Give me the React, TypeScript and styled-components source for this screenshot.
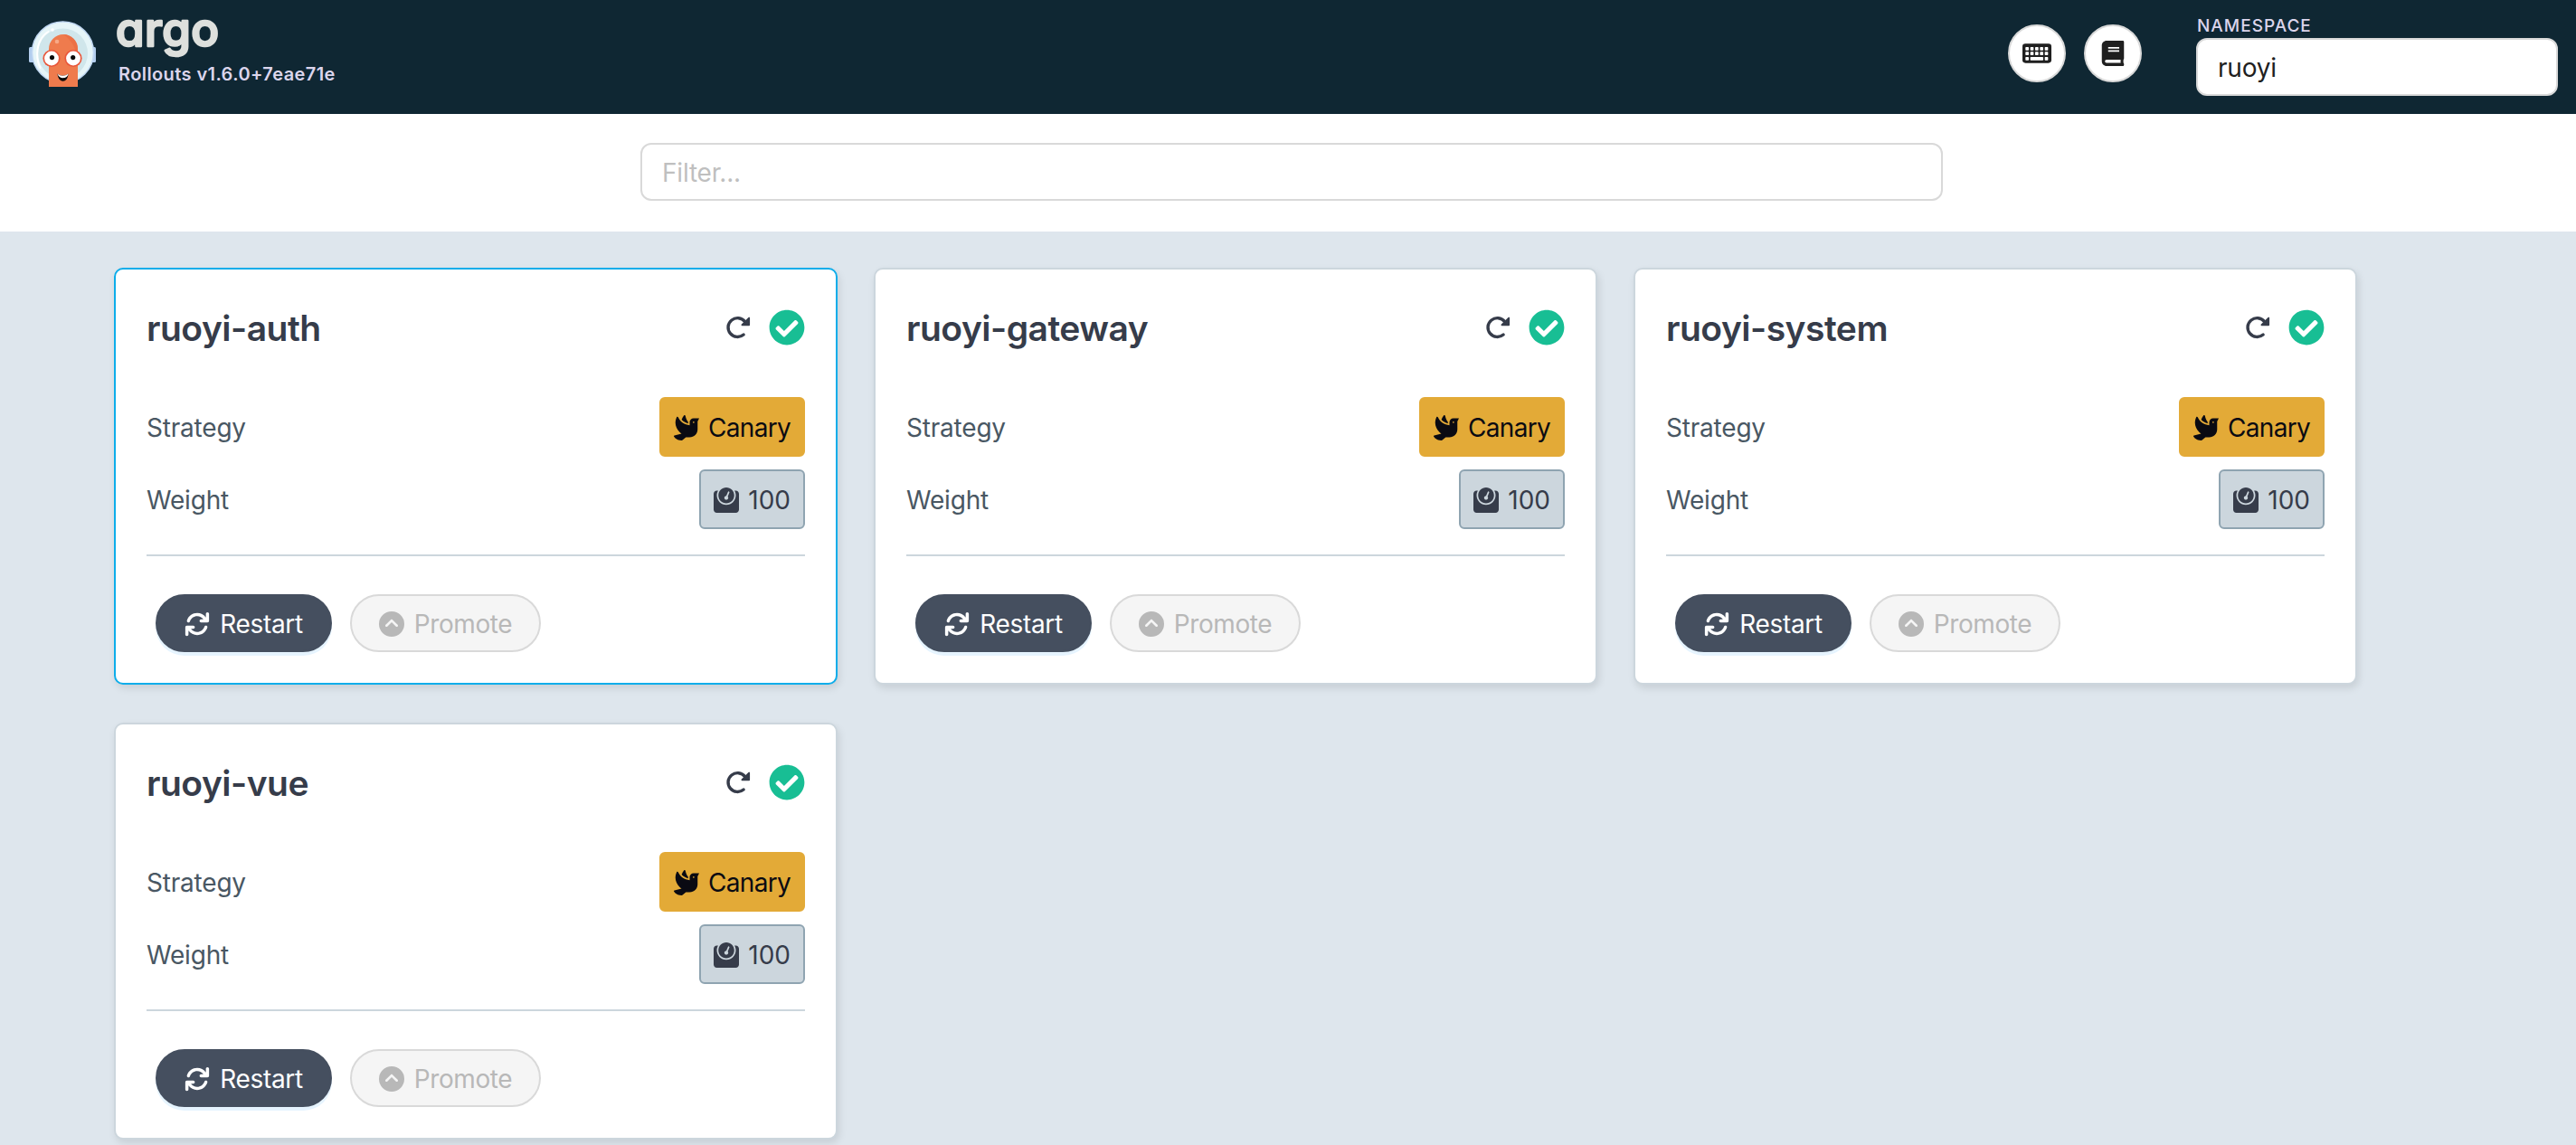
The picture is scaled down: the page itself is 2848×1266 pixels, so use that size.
import React from "react";
import styled, { createGlobalStyle, css } from "styled-components";
import { FaWeight, FaDove, FaCheckCircle, FaBook } from "react-icons/fa";
import { FaCircleChevronUp } from "react-icons/fa6";

const GlobalStyle = createGlobalStyle`
  *, *::before, *::after { box-sizing: border-box; }
  body {
    margin: 0;
    background: #dee6ed;
    font-family: Inter, "Liberation Sans", sans-serif;
    font-size: 28px;
    color: #363c4a;
  }
`;

const Page = styled.div`
  display: flex;
  flex-direction: column;
  height: 1266px;
  overflow: hidden;
  background: #dee6ed;
`;

const Header = styled.header`
  display: flex;
  align-items: flex-start;
  flex: none;
  height: 126px;
  padding: 0 20px 0 32px;
  background: #0f2733;
`;

const Mascot = styled.svg`
  display: block;
  flex: none;
  width: 74px;
  height: 74px;
  margin-top: 22px;
`;

const Brand = styled.div`
  display: flex;
  flex-direction: column;
  margin: 14px auto 0 24px;
`;

const Wordmark = styled.svg`
  display: block;
  width: 116px;
  height: 56px;
  overflow: visible;

  text {
    font-family: Inter, sans-serif;
    font-size: 51px;
    font-weight: 500;
    font-feature-settings: "cv11";
    fill: #dee0dd;
    stroke: #dee0dd;
    stroke-width: 2.5px;
    stroke-linejoin: round;
  }
`;

const Version = styled.div`
  padding-left: 1px;
  font-size: 20px;
  line-height: 24px;
  font-weight: 600;
  letter-spacing: 0.4px;
  color: #dbd5ec;
`;

const HeaderActions = styled.div`
  display: flex;
  gap: 20px;
  margin: 27px 60px 0 0;
`;

const RoundButton = styled.button`
  display: flex;
  align-items: center;
  justify-content: center;
  width: 64px;
  height: 64px;
  padding: 0;
  border: 2px solid #d9d9d9;
  border-radius: 50%;
  background: #fff;
  color: #1f1f1f;
`;

const Namespace = styled.label`
  display: flex;
  flex-direction: column;
  width: 400px;
  padding-top: 16px;
`;

const NamespaceLabel = styled.span`
  height: 26px;
  padding-left: 1px;
  font-size: 19px;
  line-height: 25px;
  font-weight: 500;
  letter-spacing: 1px;
  color: #dbd5ec;
`;

const TextInput = styled.input`
  width: 100%;
  height: 64px;
  padding: 2px 22px 0;
  border: 2px solid #d9d9d9;
  border-radius: 12px;
  background: #fff;
  font: inherit;
  font-size: 28px;
  letter-spacing: -0.2px;
  color: #1f1f1f;
  outline: none;

  &::placeholder { color: #bfbfbf; opacity: 1; }
`;

const FilterBar = styled.div`
  display: flex;
  flex: none;
  height: 130px;
  padding: 32px 700px 0 708px;
  background: #fff;
`;

const RolloutGrid = styled.main`
  display: grid;
  grid-template-columns: repeat(3, 800px);
  grid-auto-rows: 461px;
  gap: 42px 40px;
  padding: 40px 126px;
`;

const Card = styled.section<{ $selected?: boolean }>`
  display: flex;
  flex-direction: column;
  padding: 34px;
  border: 2px solid ${(p) => (p.$selected ? "#0dadea" : "#ccd6dd")};
  border-radius: 10px;
  background: #fff;
  box-shadow: 2px 4px 8px rgba(0, 0, 0, 0.1);
`;

const CardHeader = styled.div`
  display: flex;
  align-items: center;
  height: 60px;
  margin-bottom: 47px;
`;

const CardTitle = styled.h2`
  margin: 0 auto 0 0;
  padding-top: 1px;
  font-size: 39px;
  line-height: 60px;
  font-weight: 600;
  letter-spacing: -0.5px;
`;

const HealthIcon = styled(FaCheckCircle)`
  margin-left: 20px;
  color: #18be94;
`;

const Text = styled.span<{ $tracking?: number }>`
  padding-top: 2px;
  letter-spacing: ${(p) => p.$tracking ?? -0.2}px;
`;

const InfoRow = styled.div`
  display: flex;
  align-items: center;
  justify-content: space-between;
  height: 66px;
  margin-bottom: 14px;
  color: #495763;
`;

const Tag = styled.span<{ $kind: "canary" | "weight" }>`
  display: flex;
  align-items: center;
  gap: 10px;
  height: 66px;
  padding: 0 14px;
  border: 2px solid;
  border-radius: 6px;
  ${(p) =>
    p.$kind === "canary"
      ? css`
          background: #e3aa37;
          border-color: #e3aa37;
          color: #0a0a12;
        `
      : css`
          background: #ccd6dd;
          border-color: #8fa4b1;
          color: #363c4a;
        `}

  svg { margin-top: 2px; }
`;

const Actions = styled.div`
  display: flex;
  gap: 20px;
  margin-top: 14px;
  padding: 42px 10px 0;
  border-top: 2px solid #ccd6dd;
`;

const PillButton = styled.button<{ $primary?: boolean; $width: number }>`
  display: flex;
  align-items: center;
  justify-content: center;
  gap: 11px;
  width: ${(p) => p.$width}px;
  height: 64px;
  padding: 0;
  border: 2px solid;
  border-radius: 32px;
  font: inherit;
  ${(p) =>
    p.$primary
      ? css`
          background: #454f5f;
          border-color: #454f5f;
          color: #fff;
          box-shadow: 0 4px 0 #e6f4ff;
        `
      : css`
          background: #f5f5f5;
          border-color: #d9d9d9;
          color: #b8b8b8;
        `}

  svg { margin-top: 2px; }
`;

const KeyboardIcon = () => (
  <svg width="32" height="22" viewBox="0 0 96 66">
    <rect x="0" y="1" width="96" height="64" rx="10" fill="currentColor" />
    <g fill="#fff">
      {[10, 26, 42, 58, 74].map((x) => (
        <React.Fragment key={x}>
          <rect x={x} y="12" width="11" height="11" rx="2" />
          <rect x={x} y="28" width="11" height="11" rx="2" />
        </React.Fragment>
      ))}
      <rect x="10" y="45" width="11" height="11" rx="2" />
      <rect x="26" y="45" width="43" height="11" rx="2" />
      <rect x="74" y="45" width="11" height="11" rx="2" />
    </g>
  </svg>
);

const RotateRightIcon = () => (
  <svg width="28" height="28" viewBox="0 0 512 512" fill="none" stroke="currentColor">
    <path d="M368 402A190 190 0 1 1 395 140" strokeWidth="62" strokeLinecap="round" />
    <path d="M478 66V206H338z" fill="currentColor" strokeWidth="34" strokeLinejoin="round" />
  </svg>
);

const RotateIcon = () => (
  <svg width="28" height="28" viewBox="0 0 512 512" fill="currentColor">
    <path d="M464 16c-17.67 0-32 14.31-32 32v74.09C392.1 66.52 327.4 32 256 32C161.5 32 78.59 92.34 49.58 182.2c-5.438 16.81 3.797 34.88 20.61 40.28c16.89 5.5 34.88-3.812 40.3-20.59C130.9 138.5 189.4 96 256 96c50.5 0 96.26 24.55 124.4 64H336c-17.67 0-32 14.31-32 32s14.33 32 32 32h128c17.67 0 32-14.31 32-32V48C496 30.31 481.7 16 464 16zM441.8 289.6c-16.92-5.438-34.88 3.812-40.3 20.59C381.1 373.5 322.6 416 256 416c-50.5 0-96.25-24.55-124.4-64H176c17.67 0 32-14.31 32-32s-14.33-32-32-32h-128c-17.67 0-32 14.31-32 32v144c0 17.69 14.33 32 32 32s32-14.31 32-32v-74.09C119.9 445.5 184.6 480 255.1 480c94.45 0 177.4-60.34 206.4-150.2C467.9 313 458.6 294.1 441.8 289.6z" />
  </svg>
);

const ArgoMascot = () => (
  <Mascot viewBox="0 0 74 74">
    <rect x="0" y="30" width="8" height="17" rx="1.5" fill="#b2cdee" />
    <rect x="66" y="30" width="8" height="17" rx="1.5" fill="#b2cdee" />
    <circle cx="37.5" cy="36" r="34" fill="#e6f5f8" stroke="#c0d7f2" strokeWidth="1.5" />
    <circle cx="37.5" cy="37" r="27.5" fill="#d0e6eb" />
    <path d="M12.5 53C8 44 8 31 13 22C15 18 18 15 21.5 13" fill="none" stroke="#fff" strokeWidth="2" strokeLinecap="round" />
    <circle cx="26" cy="11" r="1.8" fill="#fff" />
    <path d="M22 74V32a16 16 0 0 1 32 0v42z" fill="#ef7b4d" />
    <path d="M38 16a16 16 0 0 1 16 16v10c-3-12-7-20-16-26z" fill="#e9693f" opacity=".6" />
    <circle cx="31" cy="24" r="2.3" fill="#f8a986" />
    <circle cx="25" cy="42.5" r="9.6" fill="#e9573b" />
    <circle cx="49" cy="42.5" r="9.6" fill="#e9573b" />
    <circle cx="25" cy="42.5" r="7.9" fill="#fff" />
    <circle cx="49" cy="42.5" r="7.9" fill="#fff" />
    <circle cx="25.5" cy="41.6" r="2.6" fill="#0a0a0a" />
    <circle cx="48.7" cy="41.6" r="2.6" fill="#0a0a0a" />
    <path d="M31.5 59.500c3.500 3 8 3 12 0c-.5 11-11 11-12 0z" fill="#0a0a0a" />
    <path d="M31.5 59.500c3.500 3 8 3 12 0c-.5 6-10.500 6.500-12 0z" fill="#fff" />
  </Mascot>
);

const RolloutCard = ({ name, selected }: { name: string; selected?: boolean }) => (
  <Card $selected={selected}>
    <CardHeader>
      <CardTitle>{name}</CardTitle>
      <RotateRightIcon />
      <HealthIcon size={40} />
    </CardHeader>
    <InfoRow>
      <Text>Strategy</Text>
      <Tag $kind="canary">
        <FaDove size={28} />
        <Text $tracking={-0.7}>Canary</Text>
      </Tag>
    </InfoRow>
    <InfoRow>
      <Text>Weight</Text>
      <Tag $kind="weight">
        <FaWeight size={28} />
        <Text $tracking={0}>100</Text>
      </Tag>
    </InfoRow>
    <Actions>
      <PillButton $primary $width={195}>
        <RotateIcon />
        <Text $tracking={-0.35}>Restart</Text>
      </PillButton>
      <PillButton $width={211} disabled>
        <FaCircleChevronUp size={28} />
        <Text $tracking={-0.4}>Promote</Text>
      </PillButton>
    </Actions>
  </Card>
);

const rollouts = ["ruoyi-auth", "ruoyi-gateway", "ruoyi-system", "ruoyi-vue"];

export default function App() {
  return (
    <Page>
      <GlobalStyle />
      <Header>
        <ArgoMascot />
        <Brand>
          <Wordmark viewBox="0 0 116 56">
            <text x="-2" y="37" textLength="114">argo</text>
          </Wordmark>
          <Version>Rollouts v1.6.0+7eae71e</Version>
        </Brand>
        <HeaderActions>
          <RoundButton aria-label="Keyboard shortcuts">
            <KeyboardIcon />
          </RoundButton>
          <RoundButton aria-label="Documentation">
            <FaBook size={28} />
          </RoundButton>
        </HeaderActions>
        <Namespace>
          <NamespaceLabel>NAMESPACE</NamespaceLabel>
          <TextInput defaultValue="ruoyi" />
        </Namespace>
      </Header>
      <FilterBar>
        <TextInput placeholder="Filter..." />
      </FilterBar>
      <RolloutGrid>
        {rollouts.map((name, i) => (
          <RolloutCard key={name} name={name} selected={i === 0} />
        ))}
      </RolloutGrid>
    </Page>
  );
}
